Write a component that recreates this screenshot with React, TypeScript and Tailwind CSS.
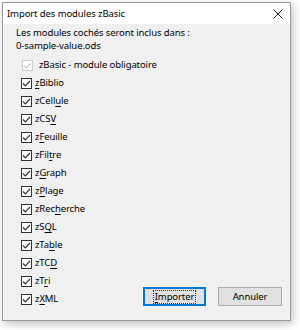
import React from 'react';

type Mod = { pre: string; key: string; post: string };

const modules: Mod[] = [
  { pre: '', key: 'z', post: 'Biblio' },
  { pre: 'zCell', key: 'u', post: 'le' },
  { pre: 'zCS', key: 'V', post: '' },
  { pre: 'z', key: 'F', post: 'euille' },
  { pre: 'zFil', key: 't', post: 're' },
  { pre: 'z', key: 'G', post: 'raph' },
  { pre: 'z', key: 'P', post: 'lage' },
  { pre: 'zRec', key: 'h', post: 'erche' },
  { pre: 'zS', key: 'Q', post: 'L' },
  { pre: 'zTa', key: 'b', post: 'le' },
  { pre: 'zTC', key: 'D', post: '' },
  { pre: 'zT', key: 'r', post: 'i' },
];

const last: Mod = { pre: 'z', key: 'X', post: 'ML' };

function Check({ disabled }: { disabled?: boolean }) {
  const c = disabled ? '#cccccc' : '#333333';
  return (
    <svg width="11" height="11" viewBox="0 0 11 11" className="shrink-0">
      <rect x="0.5" y="0.5" width="10" height="10" fill="#ffffff" stroke={c} />
      <path d="M2 5.5 L4.3 7.8 L9 3" fill="none" stroke={c} strokeWidth="1.2" />
    </svg>
  );
}

function Label({ m }: { m: Mod }) {
  return (
    <span>
      {m.pre}
      <span className="underline underline-offset-[2px]">{m.key}</span>
      {m.post}
    </span>
  );
}

export default function App() {
  return (
    <div className="w-[300px] h-[330px] bg-white p-[2px] font-['Noto_Sans',sans-serif] text-[9.5px] tracking-[-0.1px] text-black">
      <div className="w-[289px] h-[319px] border border-[#9a9a9a] shadow-[2px_3px_8px_rgba(0,0,0,0.25)] flex flex-col bg-[#f0f0f0]">
        <div className="h-[21px] bg-white flex items-center justify-between pl-[4px] pr-[7px]">
          <span className="leading-none">Import des modules zBasic</span>
          <svg width="10" height="10" viewBox="0 0 10 10">
            <path d="M0.5 0.5 L9.5 9.5 M9.5 0.5 L0.5 9.5" stroke="#222" strokeWidth="1" />
          </svg>
        </div>
        <div className="flex-1 pl-[13px] pr-[8px] pt-[2px]">
          <div className="leading-[13px]">
            <div>Les modules cochés seront inclus dans :</div>
            <div>0-sample-value.ods</div>
          </div>
          <div className="flex flex-col whitespace-nowrap mt-[4px]">
            <div className="h-[18px] flex items-center gap-[6px] pl-[6px]">
              <Check disabled />
              <span>zBasic - module obligatoire</span>
            </div>
            {modules.map((m) => (
              <div key={m.pre + m.key + m.post} className="h-[18px] flex items-center gap-[3px] pl-[5px]">
                <Check />
                <Label m={m} />
              </div>
            ))}
            <div className="h-[18px] flex items-center gap-[3px] pl-[5px]">
              <Check />
              <Label m={last} />
              <div className="ml-auto flex gap-[12px] mb-[5px]">
                <button className="w-[63px] h-[19px] bg-[#e1e1e1] border-2 border-[#0078d7] flex items-center justify-center">
                  <span className="outline-1 outline-dotted outline-[#333] px-[1px] leading-[12px]">
                    <span className="underline underline-offset-[2px]">I</span>mporter
                  </span>
                </button>
                <button className="w-[64px] h-[19px] bg-[#e1e1e1] border border-[#adadad] flex items-center justify-center leading-none">
                  Annuler
                </button>
              </div>
            </div>
          </div>
        </div>
      </div>
    </div>
  );
}
